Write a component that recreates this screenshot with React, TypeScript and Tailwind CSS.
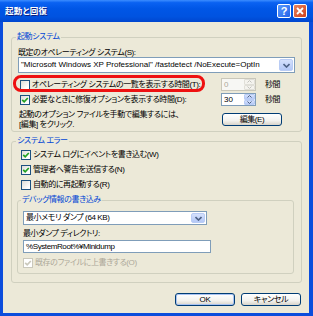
import React from "react";

const txt = "text-[8px] leading-[10px] tracking-[-0.4px] whitespace-nowrap text-black";

function Check({ checked, disabled }: { checked?: boolean; disabled?: boolean }) {
  return (
    <div
      className={
        "w-[10px] h-[10px] shrink-0 border flex items-center justify-center " +
        (disabled
          ? "border-[#CAC8BB] bg-white"
          : "border-[#1C5180] bg-[linear-gradient(135deg,#DCDCD7_0%,#FFFFFF_80%)]")
      }
    >
      {checked && (
        <svg width="8" height="8" viewBox="0 0 8 8">
          <path
            d="M1.2 3.8 L3.2 5.8 L6.8 2"
            stroke={disabled ? "#CAC8BB" : "#21A121"}
            strokeWidth="1.7"
            fill="none"
          />
        </svg>
      )}
    </div>
  );
}

function DropBtn() {
  return (
    <div className="w-[14px] self-stretch m-[1px] rounded-[2px] border border-[#B9CCF5] bg-[linear-gradient(to_bottom,#D5E1FC,#B4C8F6)] flex items-center justify-center">
      <svg width="7" height="5" viewBox="0 0 7 5">
        <path d="M0.5 1 L3.5 4 L6.5 1" stroke="#4D6185" strokeWidth="1.6" fill="none" />
      </svg>
    </div>
  );
}

function Spinner({ value, disabled }: { value: string; disabled?: boolean }) {
  const arrowColor = disabled ? "#C3C3BE" : "#4D6185";
  const btn =
    "flex-1 rounded-[1px] flex items-center justify-center " +
    (disabled
      ? "bg-[#F4F3EE] border border-[#E0DFD8]"
      : "bg-[linear-gradient(to_bottom,#D5E1FC,#B4C8F6)] border border-[#B9CCF5]");
  return (
    <div
      className={
        "w-[35px] h-[13px] border flex " +
        (disabled ? "border-[#C9C7BA] bg-[#F7F7F4]" : "border-[#7F9DB9] bg-white")
      }
    >
      <span className={"flex-1 pl-[2px] text-[8px] leading-[11px] " + (disabled ? "text-[#ACA899]" : "text-black")}>
        {value}
      </span>
      <div className="w-[11px] flex flex-col">
        <div className={btn}>
          <svg width="5" height="3" viewBox="0 0 5 3">
            <path d="M0.5 2.5 L2.5 0.5 L4.5 2.5" stroke={arrowColor} strokeWidth="1" fill="none" />
          </svg>
        </div>
        <div className={btn}>
          <svg width="5" height="3" viewBox="0 0 5 3">
            <path d="M0.5 0.5 L2.5 2.5 L4.5 0.5" stroke={arrowColor} strokeWidth="1" fill="none" />
          </svg>
        </div>
      </div>
    </div>
  );
}

function XPButton({ children, w, isDefault }: { children: React.ReactNode; w: string; isDefault?: boolean }) {
  return (
    <div
      className={
        w +
        " h-[13px] rounded-[3px] border border-[#003C74] bg-[linear-gradient(to_bottom,#FFFFFF_0%,#F3F2EE_60%,#D8D4CA_100%)] flex items-center justify-center text-[8px] leading-[10px] tracking-[-0.4px] text-black " +
        (isDefault ? "shadow-[inset_0_0_0_1px_#A9C3F2]" : "")
      }
    >
      {children}
    </div>
  );
}

function Legend({ children }: { children: React.ReactNode }) {
  return (
    <legend className="ml-[-2px] px-[1px] text-[8px] leading-[12px] tracking-[-0.4px] text-[#0046D5]">{children}</legend>
  );
}

export default function App() {
  return (
    <div className="relative w-[313px] h-[316px] flex flex-col bg-[#0B4DDC] font-['Liberation_Sans','Noto_Sans_CJK_JP',sans-serif] [font-feature-settings:'palt']">
      {/* title bar */}
      <div className="h-[22px] shrink-0 flex items-center pl-[5px] pr-[6px] bg-[linear-gradient(to_bottom,#3C8DFF_0%,#0A62F2_12%,#0056E6_40%,#0053E0_75%,#0046CF_100%)]">
        <span className="flex-1 text-white font-bold text-[8.5px] leading-[12px] tracking-[0.2px] [text-shadow:1px_1px_0_#0A1E80]">
          起動と回復
        </span>
        <div className="flex gap-[2px]">
          <div className="w-[14px] h-[14px] rounded-[2px] border border-white bg-[linear-gradient(135deg,#5A9BFF,#2462E8)] flex items-center justify-center text-white font-bold text-[11px] leading-[12px]">
            ?
          </div>
          <div className="w-[14px] h-[14px] rounded-[2px] border border-white bg-[linear-gradient(135deg,#E8845F,#D0411B)] flex items-center justify-center">
            <svg width="8" height="8" viewBox="0 0 8 8">
              <path d="M1 1 L7 7 M7 1 L1 7" stroke="white" strokeWidth="1.8" />
            </svg>
          </div>
        </div>
      </div>

      {/* frame + client */}
      <div className="flex-1 flex flex-col pl-[3px] pr-[4px] pb-[3px]">
        <div className="flex-1 bg-[#ECE9D8] flex flex-col pt-[9px] pl-[8px] pr-[7px]">
          {/* group 1 */}
          <fieldset className="border border-[#D0D0BF] rounded-[3px] px-[6px] pb-[1px]">
            <Legend>起動システム</Legend>
            <div className="flex flex-col pt-[5px]">
              <div className={txt + " h-[9px] leading-[9px]"}>既定のオペレーティング システム(S):</div>
              <div className="h-[16px] border border-[#7F9DB9] bg-white flex items-stretch">
                <span className="flex-1 pl-[2px] text-[8px] leading-[14px] whitespace-nowrap overflow-hidden text-black">
                  "Microsoft Windows XP Professional" /fastdetect /NoExecute=OptIn
                </span>
                <DropBtn />
              </div>
              <div className="mt-[5px] h-[13px] flex items-center pl-[2px]">
                <Check />
                <span className={txt + " ml-[2px]"}>オペレーティング システムの一覧を表示する時間(T):</span>
                <div className="ml-auto flex items-center gap-[9px] pr-[12px]">
                  <Spinner value="0" disabled />
                  <span className={txt + " w-[18px]"}>秒間</span>
                </div>
              </div>
              <div className="mt-[2px] h-[13px] flex items-center pl-[2px]">
                <Check checked />
                <span className={txt + " ml-[2px]"}>必要なときに修復オプションを表示する時間(D):</span>
                <div className="ml-auto flex items-center gap-[9px] pr-[12px]">
                  <Spinner value="30" />
                  <span className={txt + " w-[18px]"}>秒間</span>
                </div>
              </div>
              <div className="mt-[4px] flex items-start">
                <div className="flex flex-col pl-[1px]">
                  <span className={txt}>起動のオプション ファイルを手動で編集するには、</span>
                  <span className={txt}>[編集] をクリック.</span>
                </div>
                <div className="ml-auto pr-[13px] pt-[3px]">
                  <XPButton w="w-[60px]">編集(E)</XPButton>
                </div>
              </div>
            </div>
          </fieldset>

          {/* group 2 */}
          <fieldset className="mt-[3px] border border-[#D0D0BF] rounded-[3px] px-[6px] pb-[8px]">
            <Legend>システム エラー</Legend>
            <div className="flex flex-col">
              <div className="h-[15px] flex items-center pl-[3px]">
                <Check checked />
                <span className={txt + " ml-[2px]"}>システム ログにイベントを書き込む(W)</span>
              </div>
              <div className="h-[15px] flex items-center pl-[3px]">
                <Check checked />
                <span className={txt + " ml-[2px]"}>管理者へ警告を送信する(N)</span>
              </div>
              <div className="h-[15px] flex items-center pl-[3px]">
                <Check />
                <span className={txt + " ml-[2px]"}>自動的に再起動する(R)</span>
              </div>
              <fieldset className="mt-[2px] ml-[-1px] mr-[1px] border border-[#D0D0BF] rounded-[3px] pl-[5px] pr-[5px] pb-[3px]">
                <Legend>デバッグ情報の書き込み</Legend>
                <div className="flex flex-col pt-[5px]">
                  <div className="w-[184px] h-[14px] border border-[#7F9DB9] bg-white flex items-stretch">
                    <span className={txt + " flex-1 pl-[2px] leading-[12px]"}>最小メモリ ダンプ (64 KB)</span>
                    <DropBtn />
                  </div>
                  <div className={txt + " mt-[4px]"}>最小ダンプ ディレクトリ:</div>
                  <div className="mt-[1px] w-[188px] h-[13px] border border-[#7F9DB9] bg-white flex items-center">
                    <span className={txt + " pl-[2px] leading-[11px]"}>%SystemRoot%¥Minidump</span>
                  </div>
                  <div className="mt-[3px] h-[14px] flex items-center">
                    <Check checked disabled />
                    <span className="ml-[2px] text-[8px] leading-[10px] tracking-[-0.4px] whitespace-nowrap text-[#ACA899]">既存のファイルに上書きする(O)</span>
                  </div>
                </div>
              </fieldset>
            </div>
          </fieldset>

          {/* buttons */}
          <div className="mt-[10px] flex justify-end gap-[6px] pr-[1px]">
            <XPButton w="w-[60px]" isDefault>
              OK
            </XPButton>
            <XPButton w="w-[60px]">キャンセル</XPButton>
          </div>
        </div>
      </div>

      {/* red annotation */}
      <div className="absolute left-[13px] top-[75px] w-[192px] h-[17px] border-[3px] border-[#EE1111] rounded-[8px]" />
    </div>
  );
}
